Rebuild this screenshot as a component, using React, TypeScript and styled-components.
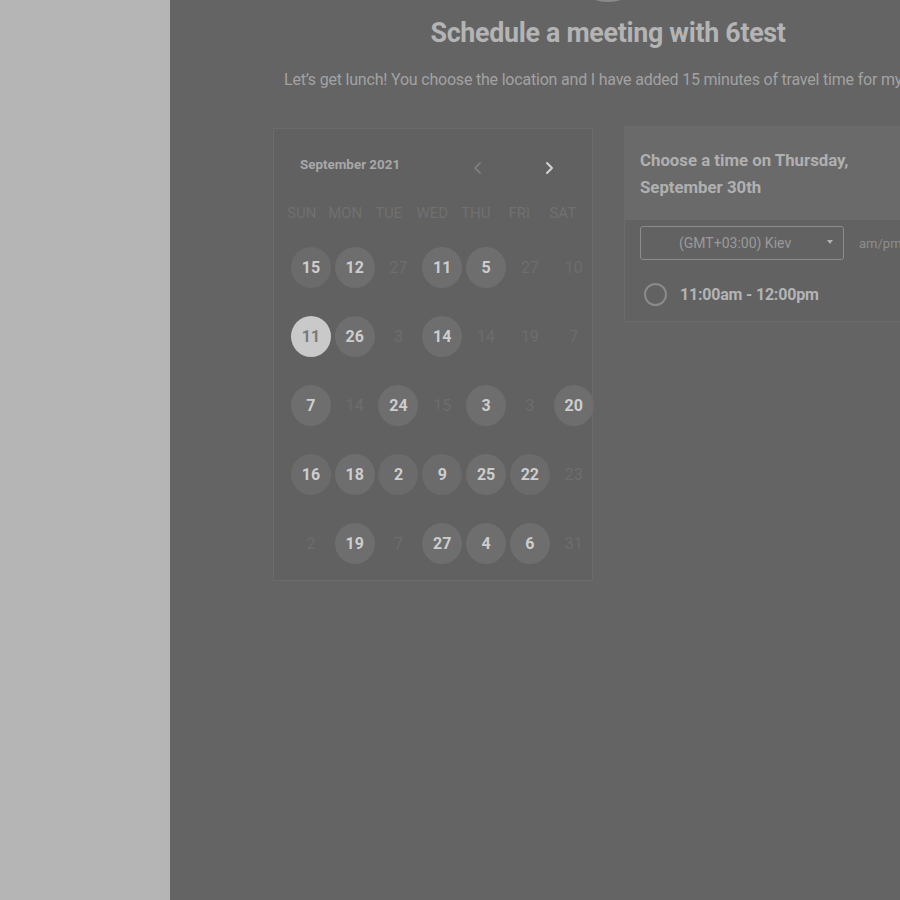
import React from "react";
import styled, { createGlobalStyle } from "styled-components";

const Global = createGlobalStyle`
  html, body { margin: 0; padding: 0; background: #646464; overflow: hidden; }
  body { font-family: Roboto, "Liberation Sans", sans-serif; }
`;

const Page = styled.div`
  display: grid;
  grid-template-columns: 170px 1fr;
  width: 900px;
  height: 900px;
  overflow: hidden;
`;

const Sidebar = styled.aside`
  background: #b5b5b5;
`;

const Main = styled.main`
  background: #646464;
  overflow: hidden;
  padding-left: 103px;
`;

const Content = styled.div`
  width: 670px;
  display: flex;
  flex-direction: column;
`;

const Avatar = styled.div`
  align-self: center;
  width: 80px;
  height: 80px;
  margin-top: -78px;
  border-radius: 50%;
  border: 2px solid #8a8a8a;
  background: #6a6a6a;
  box-sizing: border-box;
`;

const Title = styled.h1`
  margin: 16px 0 0;
  text-align: center;
  font-size: 26.8px;
  line-height: 30px;
  font-weight: 700;
  color: #b4b4b4;
  letter-spacing: -0.3px;
`;

const Subtitle = styled.p`
  margin: 22px 0 0 11px;
  font-size: 16px;
  line-height: 20px;
  font-weight: 400;
  color: #a2a2a2;
  white-space: nowrap;
  letter-spacing: -0.2px;
`;

const Row = styled.div`
  display: flex;
  align-items: flex-start;
  gap: 31px;
  margin-top: 36px;
`;

const Calendar = styled.section`
  width: 320px;
  height: 453px;
  box-sizing: border-box;
  border: 1px solid #6b6b6b;
  background: #616161;
  margin-top: 2px;
  padding: 0 0 0 6px;
`;

const CalHeader = styled.div`
  display: flex;
  align-items: center;
  height: 30px;
  margin-top: 20px;
  padding-left: 20px;
`;

const Month = styled.div`
  flex: 1;
  font-size: 13.4px;
  font-weight: 700;
  color: #a8a8a8;
`;

const NavBtn = styled.span<{ $active?: boolean }>`
  display: flex;
  align-items: center;
  justify-content: center;
  width: 20px;
  height: 20px;
  margin-right: ${(p) => (p.$active ? "33px" : "51px")};
  margin-top: 8px;
  color: ${(p) => (p.$active ? "#d2d2d2" : "#7c7c7c")};
`;

const Weekdays = styled.div`
  display: grid;
  grid-template-columns: repeat(7, 43.5px);
  margin-top: 24px;
  margin-bottom: 24px;
`;

const Weekday = styled.div`
  text-align: center;
  font-size: 15px;
  color: #707070;
  height: 20px;
  line-height: 20px;
`;

const Days = styled.div`
  display: grid;
  grid-template-columns: repeat(7, 43.8px);
  margin-left: 9px;
`;

const Cell = styled.div`
  height: 69px;
  display: flex;
  justify-content: center;
`;

const Day = styled.div<{ $kind: "off" | "on" | "sel" | "dot" }>`
  width: 40px;
  height: 41px;
  border-radius: 50%;
  display: flex;
  align-items: center;
  justify-content: center;
  font-size: 16px;
  font-weight: ${(p) => (p.$kind === "off" ? 400 : 700)};
  color: ${(p) =>
    p.$kind === "off" ? "#6d6d6d" : p.$kind === "sel" ? "#7a7a7a" : "#cdcdcd"};
  background: ${(p) =>
    p.$kind === "off"
      ? "transparent"
      : p.$kind === "sel"
      ? "#c9c9c9"
      : p.$kind === "dot"
      ? "#6b6b6b"
      : "#6e6e6e"};
`;

const TimeCard = styled.section`
  width: 320px;
  flex-shrink: 0;
  border: 1px solid #6b6b6b;
  background: #626262;
`;

const TimeHeader = styled.div`
  background: #6a6a6a;
  padding: 20px 15px 19px;
  font-size: 16.8px;
  font-weight: 700;
  line-height: 27px;
  color: #b0b0b0;
`;

const Controls = styled.div`
  display: flex;
  align-items: center;
  gap: 15px;
  padding: 6px 15px 0;
`;

const Select = styled.div`
  width: 204px;
  height: 34px;
  box-sizing: border-box;
  border: 1px solid #8c8c8c;
  border-radius: 3px;
  display: flex;
  align-items: center;
  padding: 0 10px 0 38px;
  font-size: 14px;
  color: #9a9a9a;
`;

const SelectLabel = styled.span`
  flex: 1;
`;

const Caret = styled.span`
  width: 0;
  height: 0;
  border-left: 3.5px solid transparent;
  border-right: 3.5px solid transparent;
  border-top: 4px solid #b0b0b0;
  margin-bottom: 2px;
`;

const Format = styled.span`
  font-size: 13px;
  color: #8e8e8e;
`;

const Slot = styled.div`
  display: flex;
  align-items: center;
  gap: 13px;
  padding: 23px 15px 15px 19px;
  font-size: 16px;
  font-weight: 700;
  color: #b4b4b4;
  letter-spacing: -0.2px;
`;

const Radio = styled.span`
  width: 23px;
  height: 23px;
  box-sizing: border-box;
  border: 2px solid #8a8a8a;
  border-radius: 50%;
`;

type Kind = "off" | "on" | "sel" | "dot";
const weeks: [string, Kind][][] = [
  [["15", "dot"], ["12", "on"], ["27", "off"], ["11", "on"], ["5", "on"], ["27", "off"], ["10", "off"]],
  [["11", "sel"], ["26", "on"], ["3", "off"], ["14", "on"], ["14", "off"], ["19", "off"], ["7", "off"]],
  [["7", "on"], ["14", "off"], ["24", "on"], ["15", "off"], ["3", "on"], ["3", "off"], ["20", "on"]],
  [["16", "dot"], ["18", "on"], ["2", "dot"], ["9", "dot"], ["25", "on"], ["22", "dot"], ["23", "off"]],
  [["2", "off"], ["19", "on"], ["7", "off"], ["27", "on"], ["4", "on"], ["6", "on"], ["31", "off"]],
];

const Chevron = ({ dir }: { dir: "l" | "r" }) => (
  <svg width="14" height="14" viewBox="0 0 14 14" fill="none">
    <path
      d={dir === "l" ? "M9 2 L4 7 L9 12" : "M5 2 L10 7 L5 12"}
      stroke="currentColor"
      strokeWidth="2"
      strokeLinecap="round"
      strokeLinejoin="round"
    />
  </svg>
);

export default function App() {
  return (
    <>
      <Global />
      <Page>
        <Sidebar />
        <Main>
          <Content>
            <Avatar />
            <Title>Schedule a meeting with 6test</Title>
            <Subtitle>
              Let’s get lunch! You choose the location and I have added 15 minutes of travel time for my commute.
            </Subtitle>
            <Row>
              <Calendar>
                <CalHeader>
                  <Month>September 2021</Month>
                  <NavBtn>
                    <Chevron dir="l" />
                  </NavBtn>
                  <NavBtn $active>
                    <Chevron dir="r" />
                  </NavBtn>
                </CalHeader>
                <Weekdays>
                  {["SUN", "MON", "TUE", "WED", "THU", "FRI", "SAT"].map((d) => (
                    <Weekday key={d}>{d}</Weekday>
                  ))}
                </Weekdays>
                <Days>
                  {weeks.flat().map(([n, k], i) => (
                    <Cell key={i}>
                      <Day $kind={k}>{n}</Day>
                    </Cell>
                  ))}
                </Days>
              </Calendar>
              <TimeCard>
                <TimeHeader>
                  Choose a time on Thursday,
                  <br />
                  September 30th
                </TimeHeader>
                <Controls>
                  <Select>
                    <SelectLabel>(GMT+03:00) Kiev</SelectLabel>
                    <Caret />
                  </Select>
                  <Format>am/pm</Format>
                </Controls>
                <Slot>
                  <Radio />
                  11:00am - 12:00pm
                </Slot>
              </TimeCard>
            </Row>
          </Content>
        </Main>
      </Page>
    </>
  );
}
